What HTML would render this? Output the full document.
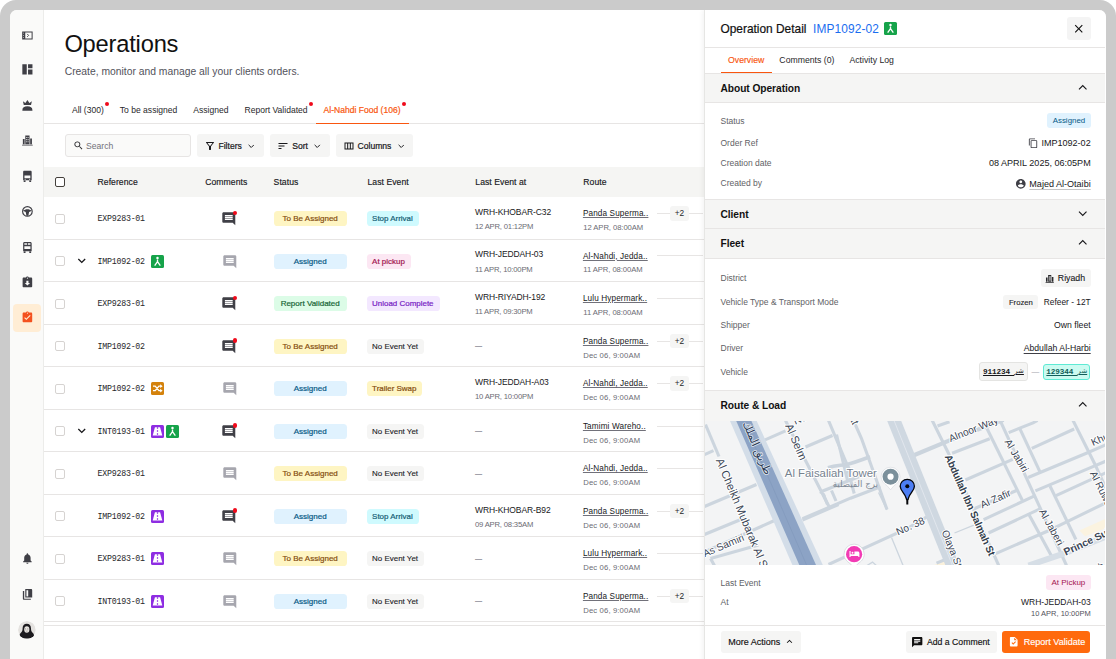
<!DOCTYPE html>
<html lang="en">
<head>
<meta charset="utf-8">
<title>Operations</title>
<style>
*{box-sizing:border-box;margin:0;padding:0}
html,body{width:1116px;height:659px;overflow:hidden;background:#fff}
body{font-family:"Liberation Sans","DejaVu Sans",sans-serif;color:#18181b;font-size:8.5px;-webkit-font-smoothing:antialiased}
svg{display:block}
.frame{position:absolute;left:0;top:0;width:1116px;height:700px;background:#cbcbcb;border-radius:16px 16px 0 0}
.app{position:absolute;left:10px;top:10px;width:1095.5px;height:690px;background:#fff;border-radius:7px 7px 0 0;overflow:hidden}
/* coordinates inside .app are target - 10 */
.abs{position:absolute}
/* sidebar */
.side{position:absolute;left:0;top:0;width:34px;height:690px;background:#fafaf9;border-right:1px solid #ececea}
.side .ic{position:absolute;left:10.8px;width:12.8px;height:12.8px;color:#3f3f46}
.side .ic svg{width:12.8px;height:12.8px;fill:currentColor}
.side .ava{position:absolute;left:8.4px;top:611.4px;width:17.6px;height:17.6px;border-radius:50%;overflow:hidden}
.side .ava svg{width:17.6px;height:17.6px}
.side .tile{position:absolute;left:3.2px;top:294.2px;width:27.6px;height:27.4px;border-radius:4px;background:#ffedd5}
/* main */
.main{position:absolute;left:34px;top:0;width:661px;height:690px;background:#fff}
h1{position:absolute;left:20.4px;top:19.3px;font-size:23.7px;font-weight:400;line-height:30px;letter-spacing:-0.2px;color:#111}
.sub{position:absolute;left:20.7px;top:54.7px;font-size:10.33px;line-height:14px;color:#52525b}
.tabs{position:absolute;left:0;padding-left:20px;top:89px;height:24.5px;right:0;border-bottom:1px solid #e7e5e4;display:flex}
.tab{position:relative;height:24.5px;padding:0 8px;line-height:23.8px;font-size:8.55px;color:#27272a;white-space:nowrap}
.tab.on{color:#f9560f;border-bottom:1.8px solid #f9560f;-webkit-text-stroke:.2px #f9560f}
.tab i{position:absolute;right:2.6px;top:2.6px;width:4px;height:4px;border-radius:50%;background:#ef0a1b}
.tools{position:absolute;left:20.75px;top:124.2px;height:22.5px;display:flex;gap:5.7px}
.search{width:126.3px;height:22.5px;border:1px solid #e7e5e4;border-radius:3px;background:#fafaf9;display:flex;align-items:center;padding:1.4px 0 0 6.85px;color:#71717a;font-size:8.6px}
.search svg{width:11px;height:11px;fill:#27272a;margin-right:2.4px;margin-top:-1px}
.btn{height:22.5px;border-radius:3px;background:#f5f5f4;display:flex;align-items:center;padding:.8px 0 0 7.5px;font-size:8.6px;-webkit-text-stroke:.2px #18181b;color:#18181b;white-space:nowrap;font-weight:400}
.btn svg{width:12px;height:12px;fill:#18181b;flex:none}
.btn svg.l{margin-right:2.2px}
.btn svg.r{margin-left:6.1px;width:6.5px;height:4.4px;fill:none;stroke:#18181b;stroke-width:1.1;margin-top:.4px}
/* table */
.thead{position:absolute;left:0;top:157px;width:661px;height:30px;background:#f5f5f3}
.thead span{position:absolute;top:0;line-height:31.6px;-webkit-text-stroke:.15px #18181b;font-size:8.65px;color:#18181b;letter-spacing:.05px}
.cb{position:absolute;left:10.6px;width:10px;height:10px;border-radius:2px;background:#fff;border:1px solid #d6d3d1}
.thead .cb{top:10.3px;left:10.6px;border:1.3px solid #44403c}
.row{position:absolute;left:0;width:661px;height:42.52px;border-bottom:1px solid #e7e5e4}
.row .cb{top:16.5px}
.ref{position:absolute;left:53.6px;top:0;line-height:44.8px;font-family:"Liberation Mono","DejaVu Sans Mono",monospace;font-size:8.3px;letter-spacing:-0.26px;color:#27272a;white-space:nowrap}
.tg{position:absolute;top:15.2px;width:13px;height:12.8px;border-radius:1.5px}
.tg svg{width:13px;height:12.8px}
.tg.g{background:#16a34a}.tg.p{background:#8e2de2}.tg.o{background:#d4820c}
.chev{position:absolute;left:30.4px;top:13.4px;width:15.5px;height:15.5px}
.chev svg{width:15.5px;height:15.5px;fill:#18181b}
.cm{position:absolute;left:176.7px;top:14.2px;width:15.6px;height:15.6px}
.cm svg{width:15.6px;height:15.6px}
.cm i{position:absolute;left:12px;top:-.7px;width:4.4px;height:4.4px;border-radius:50%;background:#ef0a1b}
.bd{position:absolute;top:13.9px;height:15.1px;border-radius:3.6px;line-height:15.6px;font-size:8.02px;-webkit-text-stroke:.2px;text-align:center;white-space:nowrap;font-weight:400}
.st{left:229.7px;width:73px}
.ev{left:323px;padding:0 6px 0 5.1px;font-size:7.96px}
.y{background:#fef5c3;color:#854d0e}
.b{background:#e0f2fe;color:#075985}
.gn{background:#dcfce7;color:#166534}
.cy{background:#cffafe;color:#155e75}
.pk{background:#fce7f3;color:#a3154f}
.pu{background:#f3e8ff;color:#7722c4}
.gy{background:#f5f5f4;color:#18181b;-webkit-text-stroke:.1px}
.at{position:absolute;left:431px;top:0;white-space:nowrap}
.at b{position:absolute;left:0;top:9.8px;font-weight:400;font-size:8.5px;line-height:11px;color:#18181b;letter-spacing:-.1px}
.at s{position:absolute;left:0;top:25px;text-decoration:none;font-size:7.7px;line-height:10px;color:#6b6b73;letter-spacing:-.2px}
.at em{position:absolute;left:.3px;top:16.6px;font-style:normal;font-size:6.6px;line-height:10px;color:#a1a1aa;-webkit-text-stroke:.35px #a1a1aa}
.rt s.d{letter-spacing:.13px}
.rt{position:absolute;left:538.9px;top:0;white-space:nowrap}
.rt u{position:absolute;left:0;top:10.9px;font-size:8.2px;line-height:11px;color:#18181b;text-underline-offset:1px;text-decoration-thickness:.5px;text-decoration-color:#71717a;letter-spacing:.12px}
.rt s{position:absolute;left:.4px;top:25.8px;text-decoration:none;font-size:7.7px;line-height:10px;color:#6b6b73;letter-spacing:-.08px}
.ln{position:absolute;left:612.5px;top:15.8px;width:46px;height:1px;background:#e7e5e4}
.p2{position:absolute;left:625.5px;top:8.8px;width:19.8px;height:14.8px;border-radius:3px;background:#f5f5f4;font-size:8.3px;line-height:14.8px;text-align:center;color:#27272a}
.panel{position:absolute;left:694.5px;top:0;width:401px;height:690px;background:#fff;box-shadow:-1px 0 0 #e6e6e4,-2px 0 5px rgba(0,0,0,.06)}
.panel .hd{position:absolute;left:0;top:0;width:400px;height:37.5px;border-bottom:1px solid #e7e5e4}
.panel .hd .t{position:absolute;left:16px;top:10.5px;font-size:11.9px;line-height:17px;color:#111;white-space:nowrap;-webkit-text-stroke:.2px #111}
.panel .hd .id{position:absolute;left:108.6px;top:10.5px;font-size:11.9px;line-height:17px;color:#1a6df0;white-space:nowrap;letter-spacing:.1px}
.panel .hd .tg{left:179.6px;top:12.4px}
.panel .x{position:absolute;left:362.5px;top:7.3px;width:23.5px;height:23px;border-radius:3px;background:#f4f4f4}
.panel .x svg{position:absolute;left:4.8px;top:4.5px;width:13.5px;height:13.5px;fill:#111}
.ptabs{position:absolute;left:16px;top:37.5px;height:25.5px;display:flex}
.ptab{height:25.5px;line-height:24.4px;padding:0 7.55px;font-size:8.7px;color:#27272a;white-space:nowrap}
.ptab.on{color:#f9560f;border-bottom:1.8px solid #f9560f;-webkit-text-stroke:.15px #f9560f}
.sec{position:absolute;left:0;width:400px;height:30px;background:#f5f5f4;border-top:1px solid #e7e5e4;border-bottom:1px solid #e7e5e4}
.sec b{position:absolute;left:16px;top:0;line-height:29.6px;font-size:10.2px;font-weight:700;color:#111;letter-spacing:-.05px}
.sec svg{position:absolute;left:373.6px;top:10.4px;width:9.5px;height:7px;fill:none;stroke:#18181b;stroke-width:1.15}
.kv{position:absolute;left:16px;width:370.2px;height:0}
.kv .k{position:absolute;left:0;top:-6px;line-height:12px;font-size:8.5px;color:#5f5f66;white-space:nowrap}
.kv .v{position:absolute;right:0;top:.6px;height:0;line-height:12px;font-size:9.05px;color:#18181b;white-space:nowrap;display:flex;align-items:center}
.pb{display:inline-block;height:14.8px;line-height:15px;padding:0 5.6px;border-radius:3px;font-size:8.3px}
.v .ul{text-decoration:underline;text-decoration-thickness:.8px;text-underline-offset:2.200px;text-decoration-color:#c4c4c4;padding-top:.8px}
.kv.f .v{top:-.1px}
.v .ud{text-decoration:underline;text-decoration-thickness:.8px;text-underline-offset:1.9px;text-decoration-color:#3f3f46;padding-top:.4px}
.vb{display:inline-flex;align-items:center;border-radius:3px;font-family:"Liberation Mono","DejaVu Sans Mono",monospace;font-weight:700;font-size:7.7px;text-decoration:underline;text-underline-offset:1.2px;white-space:nowrap;letter-spacing:-.15px}
.map{position:absolute;left:0;top:410.5px;width:400px;height:144.3px;overflow:hidden;background:#f1f3f4}
.map svg{width:400px;height:144.3px}
.ft{position:absolute;left:0;top:614.5px;width:400px;height:80px;border-top:1px solid #e7e5e4;background:#fff}
.fb{position:absolute;top:5.1px;height:22.6px;border-radius:3px;background:#f5f5f4;display:flex;align-items:center;font-size:8.7px;color:#111;white-space:nowrap;-webkit-text-stroke:.15px #111}
.fb svg{width:11px;height:11px;fill:#111}
.fb.or{background:#ff6a0d;color:#fff;-webkit-text-stroke:.15px #fff}
.fb.or svg{fill:#fff}

</style>
</head>
<body>
<div class="frame">
<div class="app">

<!-- SIDEBAR -->
<nav class="side">
<div class="ic" style="top:18.7px"><svg viewBox="0 0 24 24"><path fill-rule="evenodd" d="M2.2 4.500h19.600v15H2.200zM8 6.400v11.200h11.900V6.400z"/><path fill="#fafaf9" d="M4.300 6.900h1.400v1.700H4.300zM4.300 11.150h1.400v1.700H4.300zM4.300 15.400h1.400v1.700H4.300z"/><path fill="none" stroke="currentColor" stroke-width="1.700" d="M11.600 9.200l2.700 2.800-2.700 2.800"/></svg></div>
<div class="ic" style="top:53px"><svg viewBox="0 0 24 24"><path d="M2.5 2.5h8.3v19H2.5zM13.2 2.5h8.3v7.3h-8.3zM13.2 12.3h8.3v9.2h-8.3z"/></svg></div>
<div class="ic" style="top:88.8px"><svg viewBox="0 0 24 24"><path d="M5.2 11.2L3.6 4.2l4.6 3.4L12 1.8l3.8 5.8 4.6-3.4-1.6 7zM2.6 22v-1.6c0-4 3.6-6.6 9.4-6.6s9.4 2.6 9.4 6.6V22z"/></svg></div>
<div class="ic" style="top:124px"><svg viewBox="0 0 24 24"><path d="M8 3h8v16H8zM10 5.5v2h1.4v-2zm2.6 0v2H14v-2zM10 9.5v2h1.4v-2zm2.6 0v2H14v-2zM10 13.500v2h1.4v-2zm2.600 0v2H14v-2z" fill-rule="evenodd"/><path d="M3.500 9.500h3.300V19H3.500zM17.200 8.500h3.300V19h-3.300zM2 20h20v1.800H2z"/></svg></div>
<div class="ic" style="top:159.600px"><svg viewBox="0 0 24 24"><path fill-rule="evenodd" d="M6 1.200h12c1.100 0 2 .9 2 2V19H4V3.200c0-1.100.9-2 2-2zM6.500 10.500v4.800h11v-4.800zM5 19.500h3.500V22.500H5zM15.500 19.500H19V22.500h-3.500z"/><circle cx="7.800" cy="17.200" r="1" fill="#fafaf9"/><circle cx="16.200" cy="17.200" r="1" fill="#fafaf9"/></svg></div>
<div class="ic" style="top:195px"><svg viewBox="0 0 24 24"><circle cx="12" cy="12" r="9" fill="none" stroke="currentColor" stroke-width="2.200"/><path d="M3.500 11c2.500-2.200 5.500-3.200 8.500-3.200s6 1 8.500 3.200l-5.300 2.200c-.4 2-1 4.300-1.400 7h-3.600c-.4-2.700-1-5-1.400-7z"/></svg></div>
<div class="ic" style="top:230.600px"><svg viewBox="0 0 24 24"><path fill-rule="evenodd" d="M6.500 2h11c1.400 0 2.500 1.100 2.500 2.500V19H4V4.500C4 3.100 5.100 2 6.500 2zM6.300 4v3.200h4.900V4zm6.500 0v3.200h4.900V4zM6.300 10v5h11.400v-5zM5 19.500h3.500V22.500H5zM15.500 19.500H19V22.500h-3.500z"/></svg></div>
<div class="ic" style="top:265.600px"><svg viewBox="0 0 24 24"><path d="M19 3h-4.180C14.400 1.840 13.300 1 12 1c-1.300 0-2.400.84-2.820 2H5c-1.100 0-2 .9-2 2v14c0 1.100.9 2 2 2h14c1.100 0 2-.9 2-2V5c0-1.100-.9-2-2-2zm-7 0c.55 0 1 .45 1 1s-.45 1-1 1-1-.45-1-1 .45-1 1-1zm0 15l-5-5h3V9h4v4h3l-5 5z"/></svg></div>
<div class="tile"></div>
<div class="ic" style="top:301.200px;color:#f4511e"><svg viewBox="0 0 24 24"><path d="M19 3h-4.180C14.400 1.840 13.300 1 12 1c-1.300 0-2.400.84-2.820 2H5c-1.100 0-2 .9-2 2v14c0 1.100.9 2 2 2h14c1.100 0 2-.9 2-2V5c0-1.100-.9-2-2-2zm-7 0c.55 0 1 .45 1 1s-.45 1-1 1-1-.45-1-1 .45-1 1-1zm-2 14l-4-4 1.410-1.410L10 14.170l6.590-6.590L18 9l-8 8z"/></svg></div>
<div class="ic" style="top:542.400px"><svg viewBox="0 0 24 24"><path d="M12 22c1.100 0 2-.9 2-2h-4c0 1.100.89 2 2 2zm6-6v-5c0-3.070-1.640-5.640-4.500-6.320V4c0-.83-.67-1.500-1.500-1.500s-1.500.67-1.500 1.500v.68C7.630 5.360 6 7.920 6 11v5l-2 2v1h16v-1l-2-2z"/></svg></div>
<div class="ic" style="top:578px"><svg viewBox="0 0 24 24"><path d="M8 2h11c1.100 0 2 .9 2 2v14H8zM3.500 5.500H6V20h12.500v2.200H5.500c-1.100 0-2-.9-2-2z"/><path fill="#fafaf9" d="M10.200 4.200h3.300v11.600h-3.300z"/></svg></div>
<div class="ava"><svg viewBox="0 0 36 36"><circle cx="18" cy="18" r="18" fill="#e4e2e0"/><path fill="#1c1b1f" d="M18 5.500c-5.600 0-8.600 4.200-8.600 9.600 0 3.400-.9 6.600-3.900 9.400C3.500 26.200 3 29 3.600 31 7 34.200 12.200 36 18 36s11-1.800 14.400-5c.6-2 .1-4.800-1.900-6.500-3-2.800-3.900-6-3.900-9.400 0-5.400-3-9.600-8.600-9.600z"/><ellipse cx="18" cy="17.200" rx="5.300" ry="6.600" fill="#e9e6e2"/><path fill="#1c1b1f" d="M14.800 16.200a1 .8 0 1 0 2 0 1 .8 0 1 0-2 0zM19.200 16.200a1 .8 0 1 0 2 0 1 .8 0 1 0-2 0z"/><path fill="none" stroke="#6b6560" stroke-width=".8" d="M15.800 20.200c1.300 1 3.100 1 4.400 0"/></svg></div>

</nav>

<!-- MAIN -->
<section class="main" id="main">
<h1>Operations</h1>
<p class="sub">Create, monitor and manage all your clients orders.</p>
<div class="tabs">
<div class="tab">All (300)<i></i></div>
<div class="tab">To be assigned</div>
<div class="tab">Assigned</div>
<div class="tab">Report Validated<i></i></div>
<div class="tab on">Al-Nahdi Food (106)<i></i></div>
</div>
<div class="tools">
<div class="search"><svg viewBox="0 0 24 24"><path d="M15.5 14h-.79l-.28-.27C15.41 12.59 16 11.11 16 9.5 16 5.91 13.09 3 9.5 3S3 5.91 3 9.5 5.91 16 9.5 16c1.61 0 3.09-.59 4.23-1.57l.27.28v.79l5 4.99L20.49 19l-4.99-5zm-6 0C7.01 14 5 11.99 5 9.5S7.01 5 9.5 5 14 7.01 14 9.5 11.99 14 9.5 14z"/></svg>Search</div>
<div class="btn" style="width:67px"><svg class="l" viewBox="0 0 24 24"><path d="M7 6h10l-5.01 6.3L7 6zm-2.75-.39C6.27 8.2 10 13 10 13v6c0 .55.45 1 1 1h2c.55 0 1-.45 1-1v-6s3.72-4.8 5.74-7.39c.51-.66.04-1.61-.79-1.61H5.04c-.83 0-1.3.95-.79 1.61z"/></svg>Filters<svg class="r" viewBox="0 0 7.4 5"><path d="M.7 1l3 3 3-3"/></svg></div>
<div class="btn" style="width:60px;padding-left:7px;margin-left:.6px"><svg class="l" viewBox="0 0 24 24" style="margin-right:3.2px"><path d="M3 18h6v-2H3v2zM3 6v2h18V6H3zm0 7h12v-2H3v2z"/></svg>Sort<svg class="r" viewBox="0 0 7.4 5"><path d="M.7 1l3 3 3-3"/></svg></div>
<div class="btn" style="width:77.4px;padding-left:7.2px"><svg class="l" viewBox="0 0 24 24" style="margin-right:2.6px"><path d="M3 5v14h18V5H3zm5.33 12H5V7h3.33v10zm5.34 0h-3.33V7h3.33v10zM19 17h-3.33V7H19v10z"/></svg>Columns<svg class="r" viewBox="0 0 7.4 5"><path d="M.7 1l3 3 3-3"/></svg></div>
</div>

<div class="thead">
<div class="cb"></div>
<span style="left:53.5px">Reference</span>
<span style="left:161.2px">Comments</span>
<span style="left:229.6px">Status</span>
<span style="left:323.5px">Last Event</span>
<span style="left:431.3px">Last Event at</span>
<span style="left:539.3px">Route</span>
</div>
<div class="row" style="top:187.15px"><div class="cb"></div><div class="ref">EXP9283-01</div><div class="cm"><svg viewBox="0 0 24 24"><path fill="#3f3f46" d="M21.99 4c0-1.1-.89-2-1.99-2H4c-1.1 0-2 .9-2 2v12c0 1.1.9 2 2 2h14l4 4-.01-18zM18 14H6v-2h12v2zm0-3H6V9h12v2zm0-3H6V6h12v2z"/></svg><i></i></div><div class="bd st y">To Be Assigned</div><div class="bd ev cy">Stop Arrival</div><div class="at"><b>WRH-KHOBAR-C32</b><s>12 APR, 01:12PM</s></div><div class="rt"><u>Panda Superma..</u><s>12 APR, 08:00AM</s></div><div class="ln"></div><div class="p2">+2</div></div>
<div class="row" style="top:229.67px"><div class="cb"></div><div class="chev"><svg viewBox="0 0 24 24"><path d="M16.59 8.59L12 13.17 7.41 8.59 6 10l6 6 6-6z"/></svg></div><div class="ref">IMP1092-02</div><div class="tg g" style="left:106.9px"><svg viewBox="0 0 24 24"><circle cx="12" cy="5.600" r="2.300" fill="#fff"/><path fill="none" stroke="#fff" stroke-width="2.500" stroke-linejoin="round" d="M12 8.500v4.200M6.700 19.800L12 12.600l5.300 7.200"/></svg></div><div class="cm" style="left:177.6px"><svg viewBox="0 0 24 24"><path fill="#a6a6ae" d="M21.99 4c0-1.1-.89-2-1.99-2H4c-1.1 0-2 .9-2 2v12c0 1.1.9 2 2 2h14l4 4-.01-18zM18 14H6v-2h12v2zm0-3H6V9h12v2zm0-3H6V6h12v2z"/></svg></div><div class="bd st b">Assigned</div><div class="bd ev pk">At pickup</div><div class="at"><b>WRH-JEDDAH-03</b><s>11 APR, 10:00PM</s></div><div class="rt"><u>Al-Nahdi, Jedda..</u><s>11 APR, 08:00AM</s></div><div class="ln"></div></div>
<div class="row" style="top:272.19px"><div class="cb"></div><div class="ref">EXP9283-01</div><div class="cm"><svg viewBox="0 0 24 24"><path fill="#3f3f46" d="M21.99 4c0-1.1-.89-2-1.99-2H4c-1.1 0-2 .9-2 2v12c0 1.1.9 2 2 2h14l4 4-.01-18zM18 14H6v-2h12v2zm0-3H6V9h12v2zm0-3H6V6h12v2z"/></svg><i></i></div><div class="bd st gn">Report Validated</div><div class="bd ev pu">Unload Complete</div><div class="at"><b>WRH-RIYADH-192</b><s>11 APR, 09:30PM</s></div><div class="rt"><u>Lulu Hypermark..</u><s>11 APR, 08:00AM</s></div><div class="ln"></div></div>
<div class="row" style="top:314.71px"><div class="cb"></div><div class="ref">IMP1092-02</div><div class="cm"><svg viewBox="0 0 24 24"><path fill="#3f3f46" d="M21.99 4c0-1.1-.89-2-1.99-2H4c-1.1 0-2 .9-2 2v12c0 1.1.9 2 2 2h14l4 4-.01-18zM18 14H6v-2h12v2zm0-3H6V9h12v2zm0-3H6V6h12v2z"/></svg><i></i></div><div class="bd st y">To Be Assigned</div><div class="bd ev gy">No Event Yet</div><div class="at"><em>—</em></div><div class="rt"><u>Panda Superma..</u><s class="d">Dec 06, 9:00AM</s></div><div class="ln"></div><div class="p2">+2</div></div>
<div class="row" style="top:357.23px"><div class="cb"></div><div class="ref">IMP1092-02</div><div class="tg o" style="left:106.9px"><svg viewBox="0 0 24 24"><path fill="none" stroke="#fff" stroke-width="2.500" d="M3.500 7.800h4.200l7 8.400h3.500M3.500 16.200h4.200l7-8.400h3.500"/><path fill="#fff" d="M17 4.200l4.600 3.600L17 11.400zM17 12.600l4.600 3.600L17 19.800z"/></svg></div><div class="cm" style="left:177.6px"><svg viewBox="0 0 24 24"><path fill="#a6a6ae" d="M21.99 4c0-1.1-.89-2-1.99-2H4c-1.1 0-2 .9-2 2v12c0 1.1.9 2 2 2h14l4 4-.01-18zM18 14H6v-2h12v2zm0-3H6V9h12v2zm0-3H6V6h12v2z"/></svg></div><div class="bd st b">Assigned</div><div class="bd ev y">Trailer Swap</div><div class="at"><b>WRH-JEDDAH-A03</b><s>10 APR, 10:00PM</s></div><div class="rt"><u>Al-Nahdi, Jedda..</u><s class="d">Dec 06, 9:00AM</s></div><div class="ln"></div><div class="p2">+2</div></div>
<div class="row" style="top:399.75px"><div class="cb"></div><div class="chev"><svg viewBox="0 0 24 24"><path d="M16.59 8.59L12 13.17 7.41 8.59 6 10l6 6 6-6z"/></svg></div><div class="ref">INT0193-01</div><div class="tg p" style="left:106.9px"><svg viewBox="0 0 24 24"><path fill="#fff" d="M7.200 4.200h9.600L21 19.800H3z"/><path stroke="#8e2de2" stroke-width="2.300" stroke-dasharray="3 2.600" d="M12 4.200v16"/></svg></div><div class="tg g" style="left:122.0px"><svg viewBox="0 0 24 24"><circle cx="12" cy="5.600" r="2.300" fill="#fff"/><path fill="none" stroke="#fff" stroke-width="2.500" stroke-linejoin="round" d="M12 8.500v4.200M6.700 19.800L12 12.600l5.300 7.200"/></svg></div><div class="cm"><svg viewBox="0 0 24 24"><path fill="#3f3f46" d="M21.99 4c0-1.1-.89-2-1.99-2H4c-1.1 0-2 .9-2 2v12c0 1.1.9 2 2 2h14l4 4-.01-18zM18 14H6v-2h12v2zm0-3H6V9h12v2zm0-3H6V6h12v2z"/></svg><i></i></div><div class="bd st b">Assigned</div><div class="bd ev gy">No Event Yet</div><div class="at"><em>—</em></div><div class="rt"><u>Tamimi Wareho..</u><s class="d">Dec 06, 9:00AM</s></div><div class="ln"></div></div>
<div class="row" style="top:442.27px"><div class="cb"></div><div class="ref">EXP9283-01</div><div class="cm" style="left:177.6px"><svg viewBox="0 0 24 24"><path fill="#a6a6ae" d="M21.99 4c0-1.1-.89-2-1.99-2H4c-1.1 0-2 .9-2 2v12c0 1.1.9 2 2 2h14l4 4-.01-18zM18 14H6v-2h12v2zm0-3H6V9h12v2zm0-3H6V6h12v2z"/></svg></div><div class="bd st y">To Be Assigned</div><div class="bd ev gy">No Event Yet</div><div class="at"><em>—</em></div><div class="rt"><u>Al-Nahdi, Jedda..</u><s class="d">Dec 06, 9:00AM</s></div><div class="ln"></div></div>
<div class="row" style="top:484.79px"><div class="cb"></div><div class="ref">IMP1092-02</div><div class="tg p" style="left:106.9px"><svg viewBox="0 0 24 24"><path fill="#fff" d="M7.200 4.200h9.600L21 19.800H3z"/><path stroke="#8e2de2" stroke-width="2.300" stroke-dasharray="3 2.600" d="M12 4.200v16"/></svg></div><div class="cm"><svg viewBox="0 0 24 24"><path fill="#3f3f46" d="M21.99 4c0-1.1-.89-2-1.99-2H4c-1.1 0-2 .9-2 2v12c0 1.1.9 2 2 2h14l4 4-.01-18zM18 14H6v-2h12v2zm0-3H6V9h12v2zm0-3H6V6h12v2z"/></svg><i></i></div><div class="bd st b">Assigned</div><div class="bd ev cy">Stop Arrival</div><div class="at"><b>WRH-KHOBAR-B92</b><s>09 APR, 08:35AM</s></div><div class="rt"><u>Panda Superma..</u><s class="d">Dec 06, 9:00AM</s></div><div class="ln"></div><div class="p2">+2</div></div>
<div class="row" style="top:527.31px"><div class="cb"></div><div class="ref">EXP9283-01</div><div class="tg p" style="left:106.9px"><svg viewBox="0 0 24 24"><path fill="#fff" d="M7.200 4.200h9.600L21 19.800H3z"/><path stroke="#8e2de2" stroke-width="2.300" stroke-dasharray="3 2.600" d="M12 4.200v16"/></svg></div><div class="cm" style="left:177.6px"><svg viewBox="0 0 24 24"><path fill="#a6a6ae" d="M21.99 4c0-1.1-.89-2-1.99-2H4c-1.1 0-2 .9-2 2v12c0 1.1.9 2 2 2h14l4 4-.01-18zM18 14H6v-2h12v2zm0-3H6V9h12v2zm0-3H6V6h12v2z"/></svg></div><div class="bd st y">To Be Assigned</div><div class="bd ev gy">No Event Yet</div><div class="at"><em>—</em></div><div class="rt"><u>Lulu Hypermark..</u><s class="d">Dec 06, 9:00AM</s></div><div class="ln"></div></div>
<div class="row" style="top:569.83px"><div class="cb"></div><div class="ref">INT0193-01</div><div class="tg p" style="left:106.9px"><svg viewBox="0 0 24 24"><path fill="#fff" d="M7.200 4.200h9.600L21 19.800H3z"/><path stroke="#8e2de2" stroke-width="2.300" stroke-dasharray="3 2.600" d="M12 4.200v16"/></svg></div><div class="cm" style="left:177.6px"><svg viewBox="0 0 24 24"><path fill="#a6a6ae" d="M21.99 4c0-1.1-.89-2-1.99-2H4c-1.1 0-2 .9-2 2v12c0 1.1.9 2 2 2h14l4 4-.01-18zM18 14H6v-2h12v2zm0-3H6V9h12v2zm0-3H6V6h12v2z"/></svg></div><div class="bd st b">Assigned</div><div class="bd ev gy">No Event Yet</div><div class="at"><em>—</em></div><div class="rt"><u>Panda Superma..</u><s class="d">Dec 06, 9:00AM</s></div><div class="ln"></div><div class="p2">+2</div></div>
<div class="abs" style="left:0;top:614.7px;width:661px;height:1px;background:#e7e5e4"></div>
</section>

<!-- PANEL -->
<aside class="panel">
<div class="hd"><span class="t">Operation Detail</span><span class="id">IMP1092-02</span><div class="tg g"><svg viewBox="0 0 24 24"><circle cx="12" cy="5.600" r="2.300" fill="#fff"/><path fill="none" stroke="#fff" stroke-width="2.500" stroke-linejoin="round" d="M12 8.500v4.200M6.700 19.800L12 12.600l5.300 7.200"/></svg></div>
<div class="x"><svg viewBox="0 0 24 24"><path d="M19 6.410L17.590 5 12 10.590 6.410 5 5 6.410 10.590 12 5 17.590 6.410 19 12 13.410 17.590 19 19 17.590 13.410 12z"/></svg></div></div>
<div class="ptabs"><div class="ptab on">Overview</div><div class="ptab">Comments (0)</div><div class="ptab">Activity Log</div></div>

<div class="sec" style="top:62.5px"><b>About Operation</b><svg viewBox="0 0 9.5 7"><path d="M1 5.400L4.750 1.600 8.500 5.400"/></svg></div>
<div class="kv" style="top:110.7px"><span class="k">Status</span><span class="v"><span class="pb b" style="font-size:7.900px;padding:0 5.500px;margin-top:-1.600px">Assigned</span></span></div>
<div class="kv" style="top:132.4px"><span class="k" style="top:-5.4px">Order Ref</span><span class="v"><svg viewBox="0 0 24 24" style="width:10.5px;height:10.5px;fill:#3f3f46;margin-right:2.800px"><path d="M16 1H4c-1.100 0-2 .9-2 2v14h2V3h12V1zm3 4H8c-1.100 0-2 .9-2 2v14c0 1.100.9 2 2 2h11c1.100 0 2-.9 2-2V7c0-1.100-.9-2-2-2zm0 16H8V7h11v14z"/></svg>IMP1092-02</span></div>
<div class="kv" style="top:152.6px"><span class="k">Creation date</span><span class="v">08 APRIL 2025, 06:05PM</span></div>
<div class="kv" style="top:173.4px"><span class="k">Created by</span><span class="v"><svg viewBox="0 0 24 24" style="width:11.6px;height:11.6px;fill:#3f3f46;margin-right:2.8px"><path d="M12 2C6.480 2 2 6.480 2 12s4.480 10 10 10 10-4.480 10-10S17.520 2 12 2zm0 3c1.660 0 3 1.340 3 3s-1.340 3-3 3-3-1.340-3-3 1.340-3 3-3zm0 14.200c-2.500 0-4.710-1.280-6-3.220.030-1.990 4-3.080 6-3.080 1.990 0 5.970 1.090 6 3.080-1.290 1.940-3.500 3.220-6 3.220z"/></svg><span class="ul">Majed Al-Otaibi</span></span></div>

<div class="sec" style="top:188.5px"><b>Client</b><svg viewBox="0 0 9.5 7"><path d="M1 1.600L4.750 5.400 8.500 1.600"/></svg></div>
<div class="sec" style="top:218px;height:30.500px"><b style="line-height:30.800px">Fleet</b><svg viewBox="0 0 9.5 7"><path d="M1 5.400L4.750 1.600 8.500 5.400"/></svg></div>
<div class="kv" style="top:268px"><span class="k">District</span><span class="v"><span class="pb gy" style="height:17.8px;line-height:17.8px;font-size:8.75px;padding:.8px 5.6px 0 4.400px;display:inline-flex;align-items:center;margin-top:-.6px"><svg viewBox="0 0 24 24" style="width:9.4px;height:9.4px;fill:#27272a;margin-right:3px"><path d="M8 2.500h8V20H8zM2.500 9h4v11h-4zM17.500 7.500h4V20h-4zM1.500 20.500h21V22.500h-21z"/><path fill="#f5f5f4" d="M10 5h1.400v12.500H10zM12.600 5H14v12.500h-1.400z"/></svg>Riyadh</span></span></div>
<div class="kv f" style="top:292px"><span class="k">Vehicle Type &amp; Transport Mode</span><span class="v"><span class="pb gy" style="margin-right:5.600px;padding:0 5.400px 0 6px;font-size:7.700px">Frozen</span><span style="font-size:8.35px">Refeer - 12T</span></span></div>
<div class="kv f" style="top:315px"><span class="k">Shipper</span><span class="v" style="font-size:8.7px">Own fleet</span></div>
<div class="kv f" style="top:338px"><span class="k">Driver</span><span class="v"><span class="ud" style="font-size:8.68px">Abdullah Al-Harbi</span></span></div>
<div class="kv" style="top:361.3px"><span class="k" style="top:-5.200px">Vehicle</span><span class="v"><span class="vb" style="height:19.200px;padding:0 3.200px 0 2.800px;background:#f5f5f4;border:1px solid #e4e4e2;color:#18181b">911234&nbsp;<span style="font-family:'DejaVu Sans',sans-serif;font-weight:400;font-size:6.900px;position:relative;top:-.8px;letter-spacing:0">شر</span></span><span style="color:#a1a1aa;margin:0 4px 0 3.3px;font-size:7.8px">—</span><span class="vb" style="height:16.600px;padding:0 1.500px 0 2.200px;margin-right:1px;background:#ccfbf1;border:1px solid #5eead4;color:#115e59">129344&nbsp;<span style="font-family:'DejaVu Sans',sans-serif;font-weight:400;font-size:6.900px;position:relative;top:-.8px;letter-spacing:0">شر</span></span></span></div>

<div class="sec" style="top:380px;height:31px;border-bottom:0"><b style="line-height:30.800px">Route &amp; Load</b><svg viewBox="0 0 9.5 7"><path d="M1 5.400L4.750 1.600 8.500 5.400"/></svg></div>
<div class="map">
<svg viewBox="0 0 400 144.3" font-family="'Liberation Sans','DejaVu Sans',sans-serif">
<rect width="400" height="145" fill="#f3f4f5"/>
<g transform="translate(-704.5,-420.5)" fill="none" stroke-linecap="butt">
<!-- yellow patch -->
<path fill="#fbf3e0" stroke="none" d="M1078.9 530L1107 517.3v9.700l-22.500 8.800z"/>
<path fill="#faf1dc" stroke="none" d="M930 566l18-7 4 7z"/>
<!-- minor roads -->
<g stroke="#ccd5de" stroke-width="3.1">
<path d="M931.5 419.5L948.2 453.2 998.2 565"/>
<path d="M937 425.5L949 421.2"/>
<path d="M951.6 452.8L989.2 438.2"/>
<path d="M999.4 419.5L1066 565"/>
<path d="M985 425L1021.8 499.7"/>
<path d="M1019 427.3L1039.8 472.2"/>
<path d="M1072.3 419.5L1094.4 463.7 1107 491"/>
<path d="M1008.2 432.1L1032.5 422.4 1037 420"/>
<path d="M1031.3 447.9L1073.7 428.5"/>
<path d="M964.9 479.5L1012.2 458.8"/>
<path d="M1027.6 477L1085.9 452.8 1107 443.5"/>
<path d="M1034.9 490.4L1088.3 467.9 1107 460"/>
<path d="M1055.5 495.2L1107 471.5"/>
<path d="M1049.5 485.5L1075.4 539"/>
<path d="M983.1 519.1L1035.2 494.9"/>
<path d="M988 532.5L1040 508.2"/>
<path d="M995.2 553.1L1048.5 530 1063.1 522.8 1107 501.5"/>
<path d="M1027.9 513L1051 555.5"/>
<path d="M972 509L1016 490"/>
<path d="M936 562.6L953 555.8"/>
<path d="M705 424l13.5 32"/>
<path d="M704 454.200l9-4"/>
<path d="M704 506l52-22"/>
<path d="M704 534l40-16.5"/>
<path d="M704 551.500l70-31.5"/>
<path d="M710 558l48-13.500M710 558l5 9"/>
<path d="M764 439.600l21-9.3"/>
<path d="M805 446.500l27-11.5"/>
<path d="M785 420l20 40 23.5 46"/>
<path d="M828 420l18.5 44 4 8"/>
<path d="M853 420l8 18 25.5 71"/>
<path d="M836 434l11 46"/>
<path d="M802 518.200l48-20.5 30-11.5"/>
<path d="M802 519.500l36-15.5" />
<path d="M828 564l80-36.7 20-12"/>
<path d="M822.5 493l4.5 11M831 490l4.5 10.5"/>
<path d="M820.3 491.300l36-14.300 16-6"/>
<path d="M846 464l7.700 29"/>
</g>
<g stroke="#ccd5de" stroke-width="1.300">
<path d="M878 492l8.4 17.4"/>
<path d="M891 537l12 29"/>
<path d="M865 566l7-4.4 5 4.4"/>
<path d="M819 492l6 3"/>
<path d="M954 532.5L973.4 524.6"/>
</g>
<!-- wider roads -->
<g stroke="#cbd4dd">
<path stroke-width="3.6" d="M827.500 467.200c8-2.700 13-2 18.500-3.200s15-4.600 23.500-7.800"/>
<path stroke-width="4.2" d="M912.8 455L950.3 439.4 995.2 422.4 1003 419.3"/>
<path stroke-width="6" stroke="#d6dee6" d="M1028 565L1063.1 553.1 1107 535.5"/>
</g>
<!-- Olaya -->
<path stroke="#cfd8e1" stroke-width="13" d="M889.5 410l66.5 165"/>
<path stroke="#e3e8ee" stroke-width=".9" d="M889.5 410l66.5 165"/>
<!-- Highway -->
<path fill="#d3dde8" stroke="none" d="M729.300 420h26.700l67 146h-30.500z"/>
<path fill="#8ca3c5" stroke="none" d="M735.500 420h15.200l65.500 146h-16.700z"/>
<path stroke="#7f97ba" stroke-width=".6" d="M743.100 420l63.600 146"/>
</g>
<!-- labels -->
<g transform="translate(-704.5,-420.5)" font-size="10.2" fill="#3b4656" stroke="#fff" stroke-width="2" paint-order="stroke" stroke-linejoin="round" text-anchor="middle">
<text transform="translate(715.300,459.800) rotate(67.300)" text-anchor="start" font-size="11.200">Al Cheikh Mubarak Al Sou</text>
<text transform="translate(723,545) rotate(-23)" dy="3.5">As Samiri</text>
<text transform="translate(799.800,460.600) rotate(66.500)" text-anchor="end" font-size="11.200">Al Selm</text>
<text transform="translate(756.5,447.5) rotate(66.5)" dy="3.5" font-size="11.200" fill="#2b3a55" stroke="#dfe6ef" stroke-width="1.6" font-family="'DejaVu Sans',sans-serif">طريق الملك</text>
<text transform="translate(799.500,418.500) rotate(-23)" dy="3.5" font-size="10.500">No</text>
<text transform="translate(853.500,419.500) rotate(66)" dy="3.5" font-size="10.500">at</text>
<text transform="translate(909.8,525.6) rotate(-24)" dy="3.5">No. 38</text>
<text transform="translate(951.5,548) rotate(68)" dy="3.5">Olaya St</text>
<text transform="translate(969.5,504.5) rotate(66)" dy="3.5" font-size="10.3" stroke-width="2.2" fill="#333e4d" style="font-weight:700" letter-spacing="-.25">Abdullah Ibn Salmah St</text>
<text transform="translate(973,428.6) rotate(-22)" dy="3.5">Alnoor Way</text>
<text transform="translate(1016,455) rotate(59)" dy="3.5">Al Jabiri</text>
<text transform="translate(995,498.3) rotate(-24)" dy="3.5">Al Zafir</text>
<text transform="translate(1051,526.7) rotate(61)" dy="3.5">Al Jaberi</text>
<text transform="translate(1065.300,555.300) rotate(-25.500)" text-anchor="start" style="font-weight:700" letter-spacing="-.1" font-size="10.4">Prince Sul</text>
<text transform="translate(1101,438) rotate(-24)" dy="3.5">Khur</text>
<text transform="translate(1102.300,491.500) rotate(64)" dy="3.5">Al Ruwais</text>
<text transform="translate(1098,566) rotate(-22)" dy="3.5" font-size="9">ah</text>
</g>
<g transform="translate(-704.5,-420.5)">
<text x="784.3" y="477" font-size="11.4" fill="#76828f" stroke="#fff" stroke-width="1.8" paint-order="stroke">Al Faisaliah Tower</text>
<text x="877.500" y="486.800" font-size="8.700" fill="#7d8894" text-anchor="end" font-family="'DejaVu Sans',sans-serif">برج الفيصلية</text>
<!-- gray pin -->
<path d="M890.05 466.700a9.500 9.500 0 0 1 9.500 9.500c0 4.300-3 7.300-6 8.900l-3.500 4.200-3.500-4.200c-3-1.600-6-4.600-6-8.900a9.500 9.500 0 0 1 9.500-9.500z" fill="#fff" stroke="#d5d9dd" stroke-width=".6"/>
<circle cx="890.05" cy="476.200" r="8" fill="#7b909b"/>
<circle cx="890.05" cy="476.200" r="3.100" fill="#fff"/>
<!-- blue pin -->
<path d="M906.800 497v7" stroke="#05060a" stroke-width="2" fill="none"/>
<path d="M906.800 478.800c4.100 0 7.100 3.100 7.100 7 0 4.500-4.700 6.900-6.100 12.200l-.3 1.200h-1.400l-.3-1.200c-1.400-5.300-6.100-7.700-6.100-12.200 0-3.900 3-7 7.100-7z" fill="#4c7ef4" stroke="#05060a" stroke-width="1.300" stroke-linejoin="round"/>
<circle cx="906.800" cy="485.700" r="2" fill="#05060a"/>
<!-- pink pin -->
<path d="M853.600 543.600a10.100 10.100 0 0 1 10.100 10.100c0 4.600-3.200 7.600-6.200 9.300l-3.900 5-3.900-5c-3-1.700-6.200-4.700-6.200-9.300a10.100 10.100 0 0 1 10.100-10.100z" fill="#fff" stroke="#cfd3d8" stroke-width=".7"/>
<circle cx="853.600" cy="553.700" r="8.100" fill="#f23bb4"/>
<g fill="#fff" transform="translate(853.600,553.700)"><path d="M-4.600-3.300h1.100v6.100h-1.100zM-3.500.1h8.800v1.600h-8.800zM.3-2.800h3.400c.9 0 1.600.7 1.600 1.600V.2h-5zM4.200 1.700h1.100v1.100H4.200z"/><circle cx="-1.600" cy="-1.400" r=".95"/></g>
</g>
</svg>

</div>
<div class="kv" style="top:572.6px"><span class="k">Last Event</span><span class="v"><span class="pb pk" style="font-size:8px;padding:0 5.4px;margin-top:-2.2px">At Pickup</span></span></div>
<div class="kv" style="top:591.7px"><span class="k">At</span><span class="v" style="font-size:8.5px;letter-spacing:.02px">WRH-JEDDAH-03</span></div>
<div class="kv" style="top:603.5px"><span class="v" style="font-size:7.5px;color:#52525b">10 APR, 10:00PM</span></div>

<div class="ft">
<div class="fb" style="left:16px;width:80.5px;padding-left:7.700px;font-size:9px">More Actions<svg viewBox="0 0 24 24" style="margin-left:3.500px"><path d="M12 8l-6 6 1.410 1.410L12 10.830l4.590 4.580L18 14z"/></svg></div>
<div class="fb" style="left:201.5px;width:90.5px;padding-left:5.2px"><svg viewBox="0 0 24 24" style="margin-right:3.4px;width:12.4px;height:12.4px;margin-top:1px"><path d="M20 2H4c-1.100 0-1.990.9-1.990 2L2 22l4-4h14c1.100 0 2-.9 2-2V4c0-1.100-.9-2-2-2zM6 9h12v2H6V9zm8 5H6v-2h8v2zm4-6H6V6h12v2z"/></svg>Add a Comment</div>
<div class="fb or" style="left:297.2px;width:88.7px;padding-left:6px;font-size:9px"><svg viewBox="0 0 24 24" style="margin-right:4.6px;width:11.5px;height:11.5px"><path d="M14 2H6c-1.100 0-1.990.9-1.990 2L4 20c0 1.100.89 2 1.990 2H18c1.100 0 2-.9 2-2V8l-6-6zm-3.060 16L7.400 14.460l1.410-1.410 2.120 2.120 4.240-4.240 1.410 1.410L10.940 18zM13 9V3.500L18.500 9H13z"/></svg>Report Validate</div>
</div>

</aside>

</div>
</div>
</body>
</html>
